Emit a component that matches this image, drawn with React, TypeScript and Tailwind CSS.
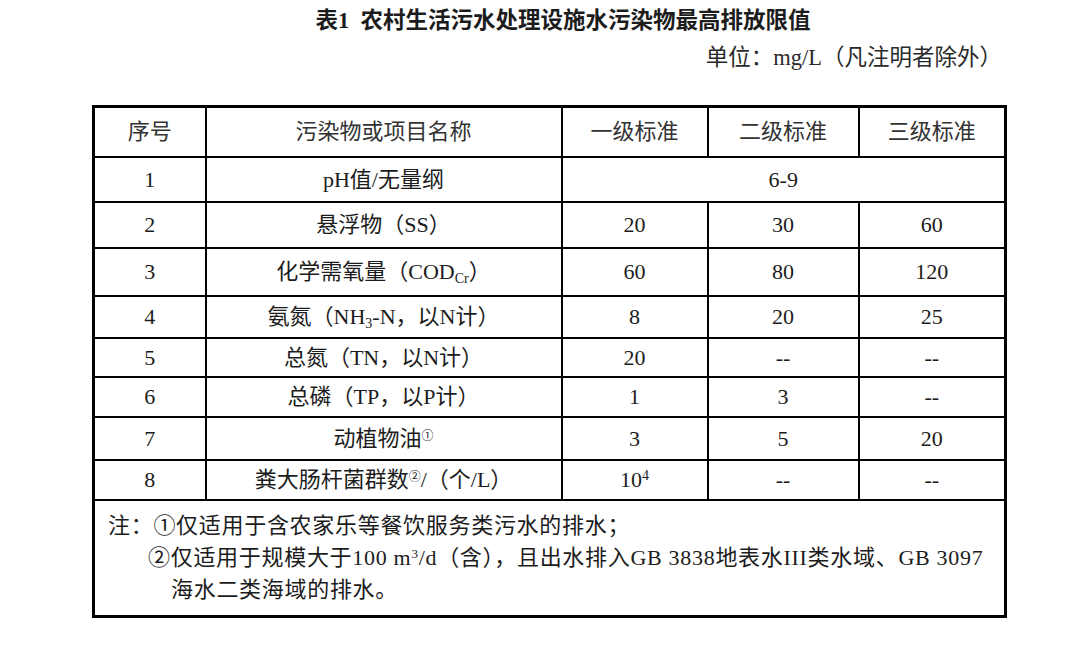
import React from "react";

const font = { fontFamily: '"Liberation Serif", "Noto Sans CJK SC", serif' };

type Row = { no: string; name: React.ReactNode; a: React.ReactNode; b?: string; c?: string; h: string; merged?: boolean };

const rows: Row[] = [
  { no: "1", name: "pH值/无量纲", a: "6-9", merged: true, h: "h-[45px]" },
  { no: "2", name: "悬浮物（SS）", a: "20", b: "30", c: "60", h: "h-[46px]" },
  {
    no: "3",
    name: (
      <>
        化学需氧量（COD<sub className="text-[14px]">Cr</sub>）
      </>
    ),
    a: "60",
    b: "80",
    c: "120",
    h: "h-[48px]",
  },
  {
    no: "4",
    name: (
      <>
        氨氮（NH<sub className="text-[14px]">3</sub>-N，以N计）
      </>
    ),
    a: "8",
    b: "20",
    c: "25",
    h: "h-[42px]",
  },
  { no: "5", name: "总氮（TN，以N计）", a: "20", b: "--", c: "--", h: "h-[39px]" },
  { no: "6", name: "总磷（TP，以P计）", a: "1", b: "3", c: "--", h: "h-[40px]" },
  {
    no: "7",
    name: (
      <>
        动植物油<sup className="text-[12px]">①</sup>
      </>
    ),
    a: "3",
    b: "5",
    c: "20",
    h: "h-[43px]",
  },
  {
    no: "8",
    name: (
      <>
        粪大肠杆菌群数<sup className="text-[12px]">②</sup>/（个/L）
      </>
    ),
    a: (
      <>
        10<sup className="text-[14px]">4</sup>
      </>
    ),
    b: "--",
    c: "--",
    h: "h-[40px]",
  },
];

const cell = "border-2 border-black text-center align-middle p-0";

export default function App() {
  return (
    <div className="w-[1086px] h-[646px] bg-white text-[#1c1c1c]" style={font}>
      <div className="pt-[7px] pl-[40px] text-center text-[22.5px] font-bold leading-[28px]">
        表1&nbsp; 农村生活污水处理设施水污染物最高排放限值
      </div>
      <div className="pt-[8px] pr-[84px] text-right text-[22.5px] leading-[30px] text-[#2a2a2a]">
        单位：mg/L（凡注明者除外）
      </div>
      <table className="mt-[32px] ml-[92px] w-[912px] table-fixed border-collapse border-[3px] border-black text-[22px]">
        <colgroup>
          <col className="w-[112px]" />
          <col className="w-[356px]" />
          <col className="w-[146px]" />
          <col className="w-[151px]" />
          <col className="w-[147px]" />
        </colgroup>
        <tbody>
          <tr className="h-[50px] text-[#333]">
            <td className={cell}>序号</td>
            <td className={cell}>污染物或项目名称</td>
            <td className={cell}>一级标准</td>
            <td className={cell}>二级标准</td>
            <td className={cell}>三级标准</td>
          </tr>
          {rows.map((r) => (
            <tr key={r.no} className={r.h}>
              <td className={cell}>{r.no}</td>
              <td className={cell}>{r.name}</td>
              {r.merged ? (
                <td className={cell} colSpan={3}>
                  {r.a}
                </td>
              ) : (
                <>
                  <td className={cell}>{r.a}</td>
                  <td className={cell}>{r.b}</td>
                  <td className={cell}>{r.c}</td>
                </>
              )}
            </tr>
          ))}
          <tr className="h-[117px]">
            <td colSpan={5} className="border-2 border-black align-top pt-[9px] pl-[13px] text-left leading-[32px] tracking-[0.7px]">
              <div>注：①仅适用于含农家乐等餐饮服务类污水的排水；</div>
              <div className="pl-[40px]">
                ②仅适用于规模大于100 m<sup className="text-[13px]">3</sup>/d（含），且出水排入GB 3838地表水III类水域、GB 3097
              </div>
              <div className="pl-[63px]">海水二类海域的排水。</div>
            </td>
          </tr>
        </tbody>
      </table>
    </div>
  );
}
